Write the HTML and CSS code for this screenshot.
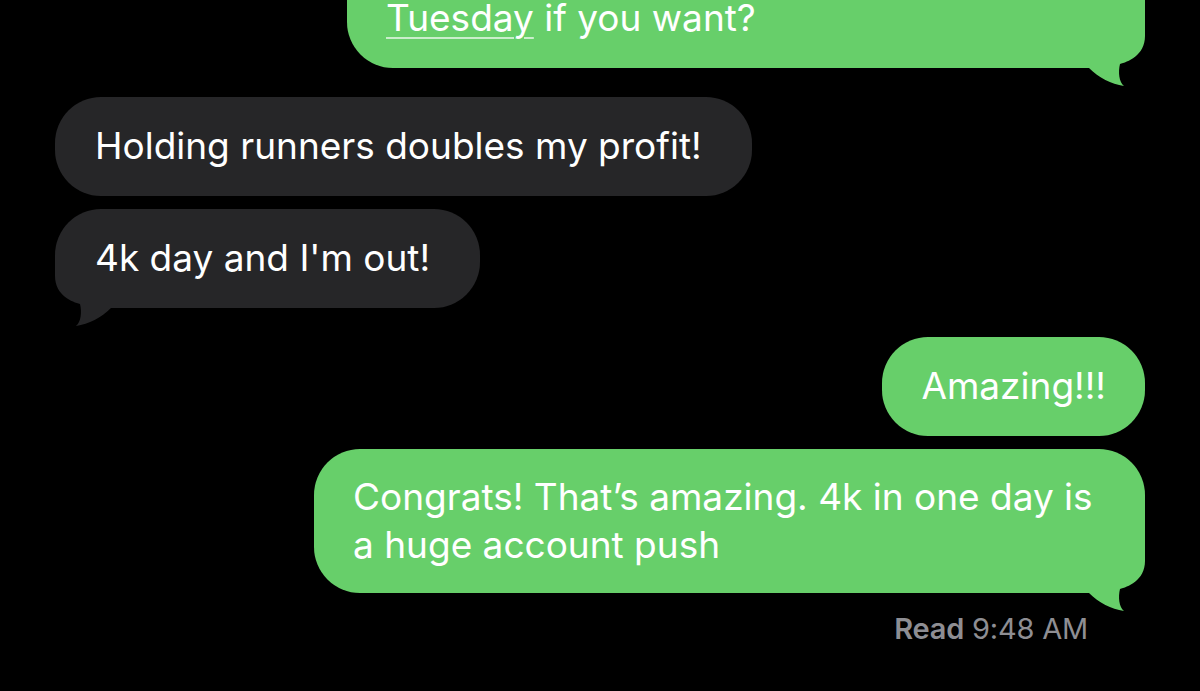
FILE: index.html
```html
<!DOCTYPE html>
<html lang="en">
<head>
    <meta charset="UTF-8">
    <meta name="viewport" content="width=device-width, initial-scale=1.0">
    <title>Messages</title>
    <link rel="stylesheet" href="styles.css">
</head>
<body>

    <!-- Conversation -->
    <div class="thread">

        <div class="msg sent cut">
            <span class="link">Tuesday</span> if you want?
            <svg class="tail-shape" viewBox="0 0 60 64" width="60" height="64"><path d="M60 0 L60 14 C60 34 42 40 35 42 C33 50 34 60 39 64 C26 62 14 56 4 46 L0 46 L0 0 Z"/></svg>
        </div>

        <div class="msg received first">Holding runners doubles my profit!</div>
        <div class="msg received">
            4k day and I'm out!
            <svg class="tail-shape" viewBox="0 0 60 64" width="60" height="64"><path d="M60 0 L60 14 C60 34 42 40 35 42 C33 50 34 60 39 64 C26 62 14 56 4 46 L0 46 L0 0 Z"/></svg>
        </div>

        <div class="msg sent first">Amazing!!!</div>
        <div class="msg sent long">
            Congrats! That’s amazing. 4k in one day is a huge account push
            <svg class="tail-shape" viewBox="0 0 60 64" width="60" height="64"><path d="M60 0 L60 14 C60 34 42 40 35 42 C33 50 34 60 39 64 C26 62 14 56 4 46 L0 46 L0 0 Z"/></svg>
        </div>

        <div class="receipt"><b>Read</b> 9:48 AM</div>

    </div>

</body>
</html>
```

FILE: styles.css
```css
* {
    margin: 0;
    padding: 0;
    box-sizing: border-box;
}

body {
    background-color: #000;
    font-family: Inter, "Noto Sans", sans-serif;
    color: #fff;
    overflow: hidden;
}

/* Thread */
.thread {
    display: flex;
    flex-direction: column;
    padding: 0 55px;
}

.msg {
    position: relative;
    z-index: 0;
    max-width: 831px;
    padding: 25px 39px 26px;
    border-radius: 46px;
    font-size: 37px;
    line-height: 48px;
    margin-top: 13px;
}

.msg.first {
    margin-top: 29px;
}

.msg.sent {
    align-self: flex-end;
    background-color: #67cf6a;
}

.msg.received {
    align-self: flex-start;
    padding-left: 40px;
    padding-right: 50px;
    background-color: #262628;
}

/* first bubble is scrolled off the top */
.msg.cut {
    width: 798px;
    margin-top: -60px;
    padding-top: 54px;
}

.msg.long {
    width: 831px;
    padding-bottom: 24px;
    padding-top: 24px;
}

.link {
    text-decoration: underline;
    text-decoration-color: rgba(255, 255, 255, 0.65);
    text-decoration-thickness: 2px;
    text-underline-offset: 6px;
}

/* Bubble tails */
.tail-shape {
    position: absolute;
    z-index: -1;
    bottom: -18px;
}

.sent .tail-shape {
    right: 0;
    fill: #67cf6a;
}

.received .tail-shape {
    left: 0;
    fill: #262628;
    transform: scaleX(-1);
}

/* Read receipt */
.receipt {
    align-self: flex-end;
    margin: 20px 57px 0 0;
    font-size: 29px;
    line-height: 32px;
    letter-spacing: -0.2px;
    color: #8e8e93;
}

.receipt b {
    font-weight: 600;
}
```
